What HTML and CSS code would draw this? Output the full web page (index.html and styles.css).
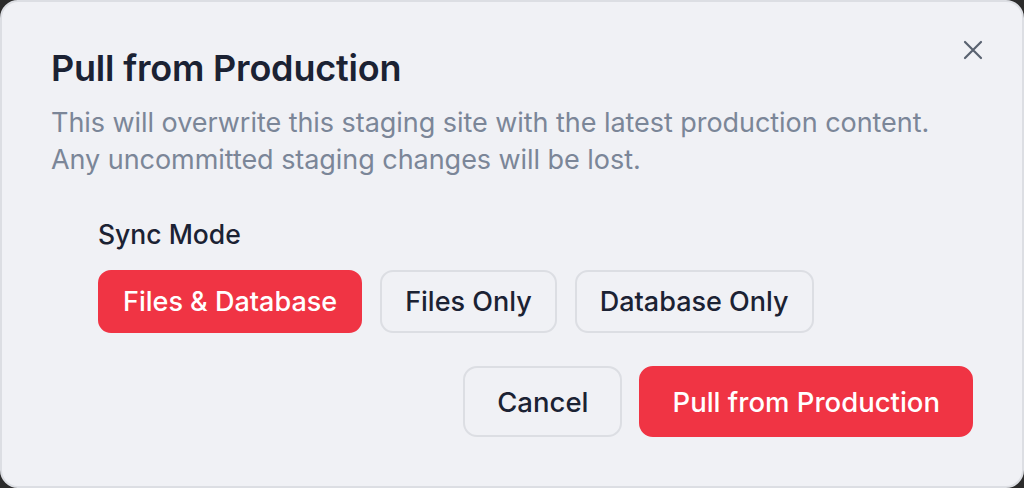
FILE: index.html
```html
<!DOCTYPE html>
<html>
<head>
<meta charset="utf-8">
<link rel="stylesheet" href="styles.css">
</head>
<body>
<div class="dialog">
  <button class="close" aria-label="Close">
    <svg width="20" height="20" viewBox="0 0 20 20"><path d="M2 2L18 18M18 2L2 18" stroke="#596270" stroke-width="2.2" stroke-linecap="round"/></svg>
  </button>
  <h1 class="title">Pull from Production</h1>
  <p class="desc">This will overwrite this staging site with the latest production content.<br>Any uncommitted staging changes will be lost.</p>
  <div class="sync">
    <div class="label">Sync Mode</div>
    <div class="options">
      <button class="opt active">Files &amp; Database</button>
      <button class="opt">Files Only</button>
      <button class="opt">Database Only</button>
    </div>
  </div>
  <div class="actions">
    <button class="btn cancel">Cancel</button>
    <button class="btn primary">Pull from Production</button>
  </div>
</div>
</body>
</html>
```
FILE: styles.css
```css
* { box-sizing: border-box; }
html, body { margin: 0; padding: 0; }
body {
  background: #2b2b2b;
  width: 1024px;
  height: 488px;
  font-family: Inter, "Noto Sans", sans-serif;
}
.dialog {
  position: relative;
  width: 1024px;
  height: 488px;
  background: #f0f1f5;
  border: 2px solid #dcdee3;
  border-radius: 18px;
  padding: 44px 49px 0 49px;
}
.close {
  position: absolute;
  top: 38px;
  right: 39px;
  width: 20px;
  height: 20px;
  padding: 0;
  border: none;
  background: none;
  display: block;
}
.close svg { display: block; }
.title {
  margin: 0;
  font-size: 36px;
  font-weight: 600;
  line-height: 44px;
  color: #1b2233;
  letter-spacing: -0.2px;
}
.desc {
  margin: 14px 0 0 0;
  font-size: 27px;
  line-height: 37px;
  color: #7b8698;
  letter-spacing: -0.05px;
}
.sync {
  margin: 40px 0 0 47px;
}
.label {
  font-size: 26.5px;
  line-height: 32px;
  font-weight: 500;
  color: #1b2233;
}
.options {
  display: flex;
  gap: 18px;
  margin-top: 20px;
}
.opt {
  height: 63px;
  padding: 0 23px;
  font-family: inherit;
  font-size: 27px;
  font-weight: 500;
  color: #1b2233;
  background: #f0f1f5;
  border: 2px solid #dcdee3;
  border-radius: 13px;
}
.opt.active {
  background: #f03444;
  border-color: #f03444;
  color: #fff;
}
.actions {
  display: flex;
  justify-content: flex-end;
  gap: 17px;
  margin: 33px 0 0 0;
}
.btn {
  height: 71px;
  padding: 0 31px;
  font-family: inherit;
  font-size: 27.5px;
  font-weight: 500;
  border-radius: 14px;
}
.cancel {
  background: #f0f1f5;
  color: #1b2233;
  border: 2px solid #dcdee3;
  padding: 0 32px;
}
.primary {
  background: #f03444;
  color: #fff;
  border: 2px solid #f03444;
  padding: 0 31px;
}
```
